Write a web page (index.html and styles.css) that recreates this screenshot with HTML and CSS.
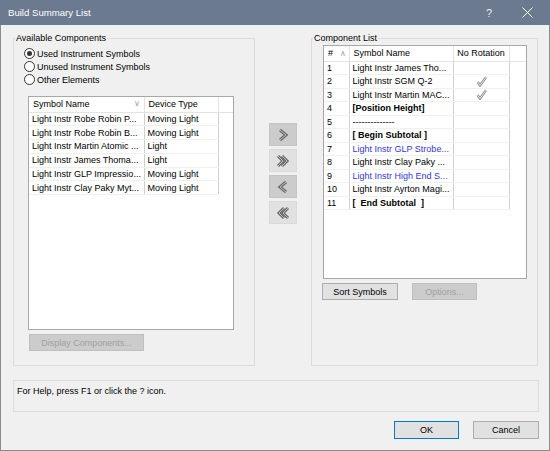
FILE: index.html
```html
<!DOCTYPE html>
<html lang="en">
<head>
    <meta charset="UTF-8">
    <title>Build Summary List</title>
    <link rel="stylesheet" href="styles.css">
</head>
<body>
    <div class="window">
        <div class="titlebar">
            <span class="title">Build Summary List</span>
            <span class="help-icon">?</span>
            <svg class="close-icon" width="11" height="11" viewBox="0 0 11 11"><path d="M0.5 0.5 L10.5 10.5 M10.5 0.5 L0.5 10.5" stroke="#fff" stroke-width="1"/></svg>
        </div>

        <div class="client">
            <div class="groups">
                <fieldset class="group group-left">
                    <legend>Available Components</legend>
                    <div class="radios">
                        <label class="radio"><span class="dot checked"></span>Used Instrument Symbols</label>
                        <label class="radio"><span class="dot"></span>Unused Instrument Symbols</label>
                        <label class="radio"><span class="dot"></span>Other Elements</label>
                    </div>

                    <div class="list list-left">
                        <table>
                            <tr class="head">
                                <th class="c-name">Symbol Name <span class="sort">&#8744;</span></th>
                                <th class="c-type">Device Type</th>
                                <th class="c-rest"></th>
                            </tr>
                            <tr><td>Light Instr Robe Robin P...</td><td>Moving Light</td><td class="blank"></td></tr>
                            <tr><td>Light Instr Robe Robin B...</td><td>Moving Light</td><td class="blank"></td></tr>
                            <tr><td>Light Instr Martin Atomic ...</td><td>Light</td><td class="blank"></td></tr>
                            <tr><td>Light Instr James Thoma...</td><td>Light</td><td class="blank"></td></tr>
                            <tr><td>Light Instr GLP Impressio...</td><td>Moving Light</td><td class="blank"></td></tr>
                            <tr><td>Light Instr Clay Paky Myt...</td><td>Moving Light</td><td class="blank"></td></tr>
                        </table>
                    </div>
                    <button class="btn disabled btn-display">Display Components...</button>
                </fieldset>

                <div class="movers">
                    <button class="mover dark">
                        <svg width="14" height="14" viewBox="0 0 14 14"><polyline points="4,2 10,7 4,12" class="chev-out"/><polyline points="4,2 10,7 4,12" class="chev-in"/></svg>
                    </button>
                    <button class="mover">
                        <svg width="16" height="14" viewBox="0 0 16 14"><polyline points="3,2 8,7 3,12" class="chev-out"/><polyline points="7,2 12,7 7,12" class="chev-out"/><polyline points="3,2 8,7 3,12" class="chev-in"/><polyline points="7,2 12,7 7,12" class="chev-in"/></svg>
                    </button>
                    <button class="mover dark">
                        <svg width="14" height="14" viewBox="0 0 14 14"><polyline points="10,2 4,7 10,12" class="chev-out"/><polyline points="10,2 4,7 10,12" class="chev-in"/></svg>
                    </button>
                    <button class="mover">
                        <svg width="16" height="14" viewBox="0 0 16 14"><polyline points="13,2 8,7 13,12" class="chev-out"/><polyline points="9,2 4,7 9,12" class="chev-out"/><polyline points="13,2 8,7 13,12" class="chev-in"/><polyline points="9,2 4,7 9,12" class="chev-in"/></svg>
                    </button>
                </div>

                <fieldset class="group group-right">
                    <legend>Component List</legend>
                    <div class="list list-right">
                        <table>
                            <tr class="head">
                                <th class="c-num"># <span class="sort">&#8743;</span></th>
                                <th class="c-sym">Symbol Name</th>
                                <th class="c-rot">No Rotation</th>
                                <th class="c-rest"></th>
                            </tr>
                            <tr><td>1</td><td>Light Instr James Tho...</td><td></td><td class="blank"></td></tr>
                            <tr><td>2</td><td>Light Instr SGM Q-2</td><td class="check"><svg width="11" height="11" viewBox="0 0 11 11"><path d="M1.5 6 L4 9.5 L10 1.2" class="tick-out"/><path d="M1.5 6 L4 9.5 L10 1.2" class="tick-in"/></svg></td><td class="blank"></td></tr>
                            <tr><td>3</td><td>Light Instr Martin MAC...</td><td class="check"><svg width="11" height="11" viewBox="0 0 11 11"><path d="M1.5 6 L4 9.5 L10 1.2" class="tick-out"/><path d="M1.5 6 L4 9.5 L10 1.2" class="tick-in"/></svg></td><td class="blank"></td></tr>
                            <tr><td>4</td><td class="bold">[Position Height]</td><td></td><td class="blank"></td></tr>
                            <tr><td>5</td><td>--------------</td><td></td><td class="blank"></td></tr>
                            <tr><td>6</td><td class="bold">[ Begin Subtotal ]</td><td></td><td class="blank"></td></tr>
                            <tr><td>7</td><td class="blue">Light Instr GLP Strobe...</td><td></td><td class="blank"></td></tr>
                            <tr><td>8</td><td>Light Instr Clay Paky ...</td><td></td><td class="blank"></td></tr>
                            <tr><td>9</td><td class="blue">Light Instr High End S...</td><td></td><td class="blank"></td></tr>
                            <tr><td>10</td><td>Light Instr Ayrton Magi...</td><td></td><td class="blank"></td></tr>
                            <tr><td>11</td><td class="bold">[&nbsp; End Subtotal&nbsp; ]</td><td></td><td class="blank"></td></tr>
                        </table>
                    </div>
                    <div class="group-buttons">
                        <button class="btn btn-sort">Sort Symbols</button>
                        <button class="btn disabled btn-options">Options...</button>
                    </div>
                </fieldset>
            </div>

            <div class="helpbox">For Help, press F1 or click the ? icon.</div>

            <div class="footer">
                <button class="btn btn-ok">OK</button>
                <button class="btn btn-cancel">Cancel</button>
            </div>
        </div>
    </div>
</body>
</html>
```

FILE: styles.css
```css
* {
    box-sizing: border-box;
}

body {
    margin: 0;
    background-color: #f0f0f0;
    font-family: 'Liberation Sans', Arial, sans-serif;
    font-size: 9px;
    color: #000;
}

.window {
    width: 550px;
    height: 451px;
}

.titlebar {
    height: 25px;
    background-color: #6b7a8f;
    color: #fff;
    display: flex;
    align-items: center;
    padding-left: 8px;
}

.title {
    font-size: 9.6px;
    flex: 1;
}

.help-icon {
    font-size: 11px;
    margin-right: 30px;
    color: #e8ecf2;
}

.close-icon {
    margin-right: 17px;
}

.client {
    height: 426px;
    border: 1px solid #8c8c8c;
    border-top: none;
    padding: 7px 11px 0 12px;
}

.groups {
    display: flex;
}

.group {
    margin: 0;
    padding: 0;
    border: 1px solid #dcdcdc;
    height: 334px;
    min-width: 0;
}

.group legend {
    padding: 0 1px;
    margin-left: 1px;
    line-height: 12px;
}

.group-left {
    width: 242px;
}

.group-right {
    width: 227px;
}

.radios {
    padding: 3px 0 0 10px;
}

.radio {
    display: flex;
    align-items: center;
    height: 13px;
}

.dot {
    width: 11px;
    height: 11px;
    border: 1px solid #333;
    border-radius: 50%;
    background-color: #fff;
    margin-right: 2px;
    display: flex;
    align-items: center;
    justify-content: center;
}

.dot.checked::after {
    content: "";
    width: 5px;
    height: 5px;
    border-radius: 50%;
    background-color: #333;
}

.list {
    background-color: #fff;
    border: 1px solid #a8a8a8;
    height: 234px;
    overflow: hidden;
}

.list-left {
    margin: 10px 0 0 14px;
    width: 206px;
}

.list-right {
    margin: 1px 0 0 11px;
    width: 204px;
}

table {
    border-collapse: collapse;
    table-layout: fixed;
    width: 100%;
}

th {
    font-weight: normal;
    text-align: left;
    height: 15px;
    padding: 0 0 0 4px;
    border-right: 1px solid #e3e3e3;
    border-bottom: 1px solid #e3e3e3;
    white-space: nowrap;
    position: relative;
}

th.c-rest {
    border-right: none;
}

td {
    padding: 0 0 0 3px;
    white-space: nowrap;
    border-right: 1px solid #cfcfcf;
    border-bottom: 1px solid #f0f0f0;
}

td.blank {
    border: none;
}

.list-left td {
    height: 13.8px;
}

.list-right td {
    height: 13.5px;
}

.list-left .c-name { width: 115px; }
.list-left .c-type { width: 74px; }

.list-right .c-num { width: 25px; }
.list-right .c-sym { width: 104px; }
.list-right .c-rot { width: 56px; text-align: center; padding: 0; }

.sort {
    color: #a0a0a0;
    font-size: 8px;
    margin-left: 4px;
}

.list-left .sort {
    position: absolute;
    right: 4px;
    top: 2px;
}

.bold {
    font-weight: bold;
}

.blue {
    color: #3535d8;
}

td.check {
    text-align: center;
    padding: 0;
}

td.check svg {
    display: block;
    margin: 0 auto;
}

.tick-out {
    fill: none;
    stroke: #8f8f8f;
    stroke-width: 2.4;
}

.tick-in {
    fill: none;
    stroke: #f2f2f2;
    stroke-width: 0.8;
}

.btn {
    font-family: inherit;
    font-size: 9px;
    height: 17px;
    padding: 0;
    background-color: #e1e1e1;
    border: 1px solid #adadad;
    color: #000;
}

.btn.disabled {
    background-color: #cccccc;
    border-color: #bfbfbf;
    color: #a0a0a0;
}

.btn-display {
    display: block;
    width: 115px;
    margin: 4px 0 0 15px;
}

.group-buttons {
    display: flex;
    gap: 14px;
    margin: 4px 0 0 10px;
}

.btn-sort {
    width: 76px;
}

.btn-options {
    width: 65px;
}

.movers {
    width: 56px;
    display: flex;
    flex-direction: column;
    align-items: center;
    gap: 3px;
    padding-top: 91px;
}

.mover {
    width: 28px;
    height: 23px;
    border: 1px solid #dadada;
    background-color: #e1e1e1;
    display: flex;
    align-items: center;
    justify-content: center;
    padding: 0;
}

.mover.dark {
    background-color: #cccccc;
    border-color: #c4c4c4;
}

.chev-out {
    fill: none;
    stroke: #6a6a6a;
    stroke-width: 3;
}

.chev-in {
    fill: none;
    stroke: #bdbdbd;
    stroke-width: 1;
}

.helpbox {
    margin-top: 14px;
    height: 32px;
    width: 526px;
    border: 1px solid #dcdcdc;
    padding: 4px 3px;
    line-height: 12px;
}

.footer {
    display: flex;
    justify-content: flex-end;
    gap: 14px;
    margin-top: 9px;
    width: 526px;
}

.btn-ok {
    width: 65px;
    height: 18px;
    border-color: #0078d7;
}

.btn-cancel {
    width: 66px;
    height: 18px;
}
```
